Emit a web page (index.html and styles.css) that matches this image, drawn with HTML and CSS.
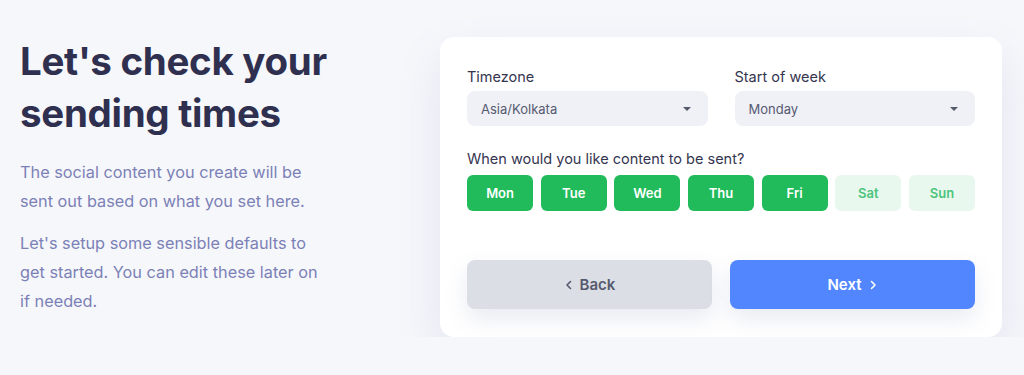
FILE: index.html
```html
<!DOCTYPE html>
<html lang="en">
<head>
  <meta charset="UTF-8" />
  <title>Sending times</title>
  <link rel="stylesheet" href="styles.css">
</head>
<body>
  <div class="page">
    <div class="intro">
      <h1>Let's check your sending times</h1>
      <p>The social content you create will be sent out based on what you set here.</p>
      <p>Let's setup some sensible defaults to get started. You can edit these later on if needed.</p>
    </div>

    <div class="card">
      <div class="fields">
        <div class="field">
          <label>Timezone</label>
          <div class="select">Asia/Kolkata<span class="caret"></span></div>
        </div>
        <div class="field">
          <label>Start of week</label>
          <div class="select">Monday<span class="caret"></span></div>
        </div>
      </div>

      <label class="days-label">When would you like content to be sent?</label>
      <div class="days">
        <button class="day on">Mon</button>
        <button class="day on">Tue</button>
        <button class="day on">Wed</button>
        <button class="day on">Thu</button>
        <button class="day on">Fri</button>
        <button class="day">Sat</button>
        <button class="day">Sun</button>
      </div>

      <div class="actions">
        <button class="btn back">
          <svg width="10" height="10" viewBox="0 0 10 10"><path d="M6.5 1.5 3 5l3.5 3.5" fill="none" stroke="currentColor" stroke-width="1.6" stroke-linecap="round" stroke-linejoin="round"/></svg>
          Back
        </button>
        <button class="btn next">
          Next
          <svg width="10" height="10" viewBox="0 0 10 10"><path d="M3.5 1.5 7 5 3.5 8.5" fill="none" stroke="currentColor" stroke-width="1.6" stroke-linecap="round" stroke-linejoin="round"/></svg>
        </button>
      </div>
    </div>
  </div>
</body>
</html>
```

FILE: styles.css
```css
body {
  margin: 0;
  background: #f6f7fb;
  font-family: Inter, "Noto Sans", sans-serif;
  color: #2e2f4d;
}
.page {
  display: flex;
  justify-content: space-between;
  align-items: flex-start;
  padding: 37px 22px 0 20px;
}
.intro {
  width: 312px;
  margin-top: -2px;
}
.intro h1 {
  margin: 0 0 19px 0;
  font-size: 38.5px;
  line-height: 52px;
  font-weight: 700;
  letter-spacing: -0.3px;
  color: #2f3050;
}
.intro p {
  margin: 0 0 14px 0;
  font-size: 16.3px;
  line-height: 28.7px;
  color: #7b81b6;
}
.card {
  width: 508px;
  background: #fff;
  border-radius: 14px;
  padding: 31px 27px 28px 27px;
  box-shadow: 0 20px 45px rgba(110, 120, 175, 0.14);
}
.fields {
  display: flex;
  gap: 27px;
}
.field {
  flex: 1;
}
label {
  display: block;
  font-size: 14.5px;
  font-weight: 400;
  color: #34354f;
  margin-bottom: 6px;
}
.select {
  height: 35px;
  background: #f0f1f6;
  border-radius: 8px;
  padding: 0 17px 0 14px;
  display: flex;
  align-items: center;
  justify-content: space-between;
  font-size: 13px;
  color: #565a70;
}
.caret {
  width: 0;
  height: 0;
  border-left: 4px solid transparent;
  border-right: 4px solid transparent;
  border-top: 4px solid #555a6b;
}
.days-label {
  margin-top: 24px;
  margin-bottom: 8px;
}
.days {
  display: flex;
  gap: 7.5px;
}
.day {
  flex: 1;
  height: 36px;
  border: none;
  border-radius: 6px;
  background: #e8f8ee;
  color: #4dc47c;
  font-family: inherit;
  font-size: 13px;
  font-weight: 600;
}
.day.on {
  background: #21bb5b;
  color: #fff;
}
.actions {
  display: flex;
  gap: 18px;
  margin-top: 49px;
}
.btn {
  flex: 1;
  height: 49px;
  border: none;
  border-radius: 8px;
  font-family: inherit;
  font-size: 15px;
  font-weight: 600;
  display: flex;
  align-items: center;
  justify-content: center;
  gap: 6px;
  box-shadow: 0 10px 22px rgba(110, 120, 170, 0.15);
}
.back {
  background: #dcdee5;
  color: #565a6e;
}
.next {
  background: #5286ff;
  color: #fff;
}
```
